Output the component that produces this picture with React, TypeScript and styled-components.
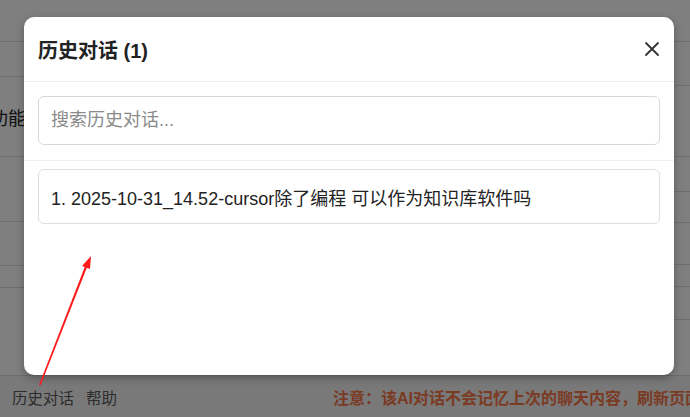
import React from 'react';
import styled, { createGlobalStyle } from 'styled-components';

const GlobalStyle = createGlobalStyle`
    html, body {
        margin: 0;
        padding: 0;
        width: 690px;
        height: 417px;
        overflow: hidden;
        font-family: "Liberation Sans", "Noto Sans CJK SC", sans-serif;
        background: #ffffff;
    }
`;

// page behind the dialog
const Page = styled.div`
    position: relative;
    width: 690px;
    height: 417px;
    display: flex;
    flex-direction: column;
    overflow: hidden;
`;

const Table = styled.div`
    flex: 1;
    display: grid;
    grid-template-columns: 345px 345px;
`;

const Column = styled.div`
    display: flex;
    flex-direction: column;
`;

const Row = styled.div<{ $h: number }>`
    height: ${(p) => p.$h}px;
    border-bottom: 1px solid #dcdcdc;
    display: flex;
    align-items: center;
    font-size: 18px;
    color: #222;
    box-sizing: border-box;
`;

const CutText = styled.span`
    margin-left: -10px;
`;

const Footer = styled.div`
    height: 41px;
    background: #f2f2f2;
    display: flex;
    align-items: center;
    padding: 0 0 0 12px;
    gap: 12px;
    white-space: nowrap;
    overflow: hidden;
`;

const FooterLink = styled.span`
    font-size: 15.5px;
    color: #5a5a5a;
`;

const Notice = styled.span`
    margin-left: 204px;
    font-size: 16px;
    font-weight: bold;
    color: #f57546;
`;

const Overlay = styled.div`
    position: absolute;
    inset: 0;
    background: rgba(0, 0, 0, 0.5);
    display: flex;
    align-items: flex-start;
    padding: 17px 16px 0 24px;
`;

const Modal = styled.div`
    width: 650px;
    height: 358px;
    background: #fff;
    border-radius: 10px;
    box-shadow: 0 3px 8px rgba(0, 0, 0, 0.3);
    display: flex;
    flex-direction: column;
    overflow: hidden;
`;

const ModalHeader = styled.div`
    height: 65px;
    box-sizing: border-box;
    border-bottom: 1px solid #eeeeee;
    display: flex;
    align-items: center;
    justify-content: space-between;
    padding: 0 14px 0 14px;
`;

const Title = styled.h2`
    margin: 0;
    font-size: 20px;
    font-weight: bold;
    color: #222;
`;

const CloseBtn = styled.button`
    border: none;
    background: none;
    padding: 0;
    width: 16px;
    height: 16px;
    display: flex;
    cursor: pointer;
`;

const SearchArea = styled.div`
    padding: 14px 14px 15px;
    border-bottom: 1px solid #f0f0f0;
`;

const SearchInput = styled.input`
    width: 100%;
    height: 49px;
    box-sizing: border-box;
    border: 1px solid #d9d9d9;
    border-radius: 6px;
    padding: 0 12px;
    font-size: 18px;
    font-family: inherit;
    color: #222;
    outline: none;
    &::placeholder {
        color: #8a8a8a;
    }
`;

const List = styled.div`
    padding: 8px 14px;
    display: flex;
    flex-direction: column;
    gap: 8px;
`;

const Item = styled.div`
    height: 55px;
    box-sizing: border-box;
    border: 1px solid #dddddd;
    border-radius: 6px;
    padding: 0 12px;
    display: flex;
    align-items: center;
    font-size: 18px;
    color: #222;
`;

const Arrow = styled.svg`
    position: absolute;
    left: 0;
    top: 0;
    pointer-events: none;
`;

const leftRows = [42, 35, 80, 65, 44, 22, 88];
const rightRows = [42, 44, 71, 35, 31, 42, 22, 33, 56];

const App: React.FC = () => {
    return (
        <>
            <GlobalStyle />
            <Page>
                <Table>
                    <Column>
                        {leftRows.map((h, i) => (
                            <Row key={i} $h={h}>{i === 2 && <CutText>功能</CutText>}</Row>
                        ))}
                    </Column>
                    <Column>
                        {rightRows.map((h, i) => (
                            <Row key={i} $h={h} />
                        ))}
                    </Column>
                </Table>
                <Footer>
                    <FooterLink>历史对话</FooterLink>
                    <FooterLink>帮助</FooterLink>
                    <Notice>注意：该AI对话不会记忆上次的聊天内容，刷新页面将清空对话</Notice>
                </Footer>
                <Overlay>
                    <Modal>
                        <ModalHeader>
                            <Title>历史对话 (1)</Title>
                            <CloseBtn aria-label="关闭">
                                <svg width="16" height="16" viewBox="0 0 16 16">
                                    <path d="M2 2 L14 14 M14 2 L2 14" stroke="#333" strokeWidth="1.8" strokeLinecap="round" />
                                </svg>
                            </CloseBtn>
                        </ModalHeader>
                        <SearchArea>
                            <SearchInput placeholder="搜索历史对话..." />
                        </SearchArea>
                        <List>
                            <Item>1. 2025-10-31_14.52-cursor除了编程 可以作为知识库软件吗</Item>
                        </List>
                    </Modal>
                </Overlay>
                <Arrow width="690" height="417" viewBox="0 0 690 417">
                    <polygon points="39,385 40.6,385.3 87.5,266 85.5,265" fill="#ff1a1a" />
                    <polygon points="91,256 82,266 90,269" fill="#ff1a1a" />
                </Arrow>
            </Page>
        </>
    );
};

export default App;
